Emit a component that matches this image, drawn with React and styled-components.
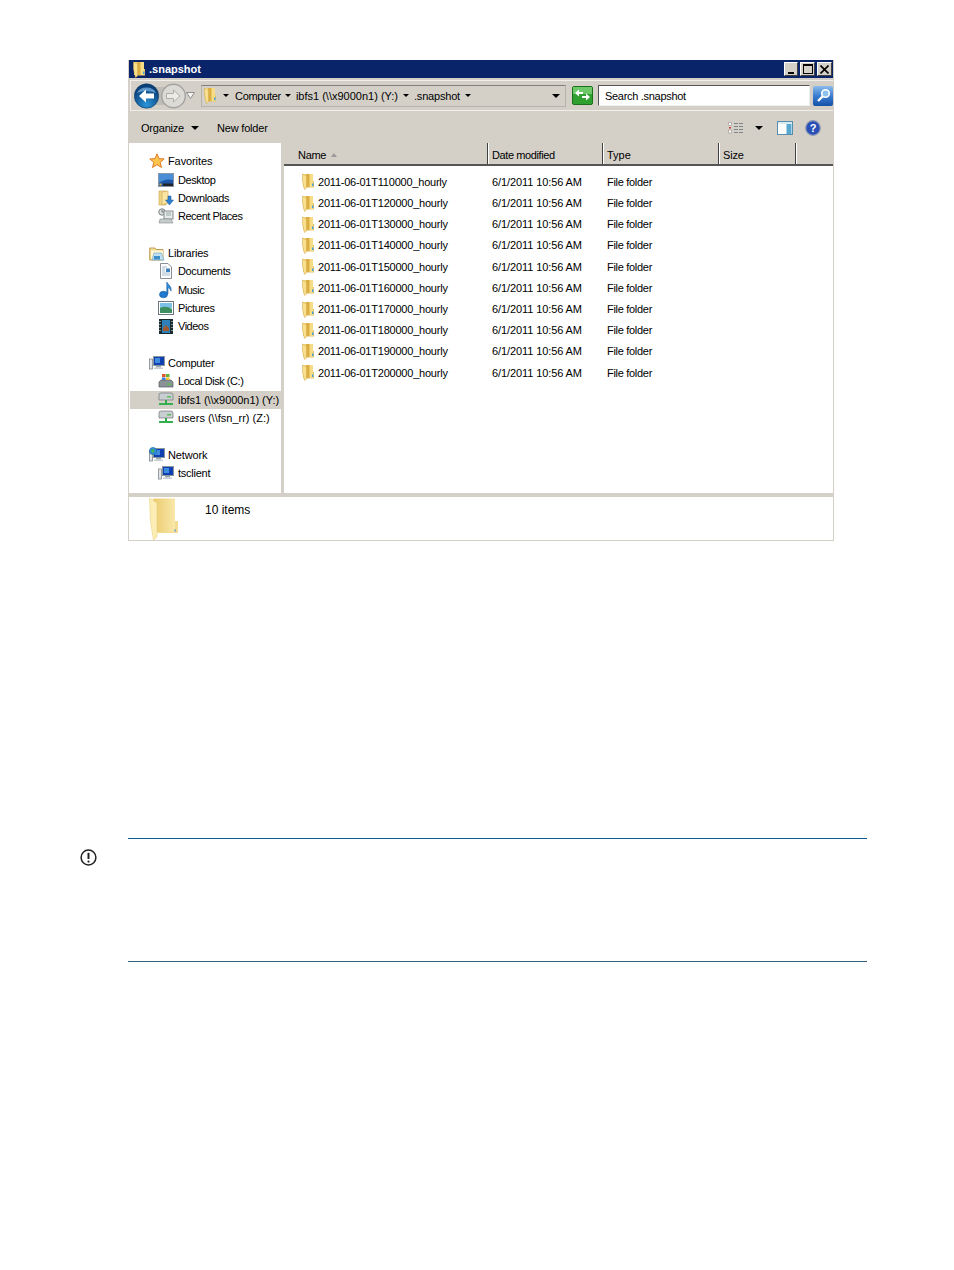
import styled, { createGlobalStyle } from "styled-components";

const GlobalStyle = createGlobalStyle`
  html, body { margin: 0; padding: 0; background: #fff; }
  body { font-family: "Liberation Sans", Arial, sans-serif; font-size: 11px; color: #000; }
`;

const Page = styled.div`
  width: 954px;
  height: 1270px;
  padding-top: 60px;
  box-sizing: border-box;
  overflow: hidden;
`;

const Window = styled.div`
  width: 706px;
  height: 481px;
  margin-left: 128px;
  display: flex;
  flex-direction: column;
  box-sizing: border-box;
  border-left: 1px solid #d4d0c8;
  border-right: 1px solid #d4d0c8;
  border-bottom: 1px solid #d4d0c8;
`;

const TitleBar = styled.div`
  height: 18px;
  background: #0a246a;
  display: flex;
  align-items: center;
  padding: 0 1px 0 3px;
  gap: 3px;
  color: #fff;
  font-weight: bold;
`;

const TitleText = styled.span`
  flex: 1;
`;

const WinButton = styled.div`
  width: ${(p) => p.$w || 15}px;
  height: 14px;
  margin-left: -1px;
  background: #d4d0c8;
  border: 1px solid;
  border-color: #fff #404040 #404040 #fff;
  box-sizing: border-box;
  display: flex;
  align-items: center;
  justify-content: center;
`;

const AddressBand = styled.div`
  height: 35px;
  background: #d4d0c8;
  display: flex;
  align-items: center;
  gap: 6px;
  padding: 0 0 0 4px;
  border: 2px solid #d4d0c8;
  border-left-width: 1px;
  border-right-width: 0;
  box-shadow: inset 1px 1px 0 #f1efea, inset 0 -1px 0 #f1efea;
  box-sizing: border-box;
`;

const NavGroup = styled.div`
  display: flex;
  align-items: center;
  width: 61px;
  flex: none;
`;

const AddressBox = styled.div`
  width: 365px;
  height: 22px;
  box-sizing: border-box;
  border: 1px solid #b8b4ac;
  border-top-color: #808080;
  display: flex;
  align-items: center;
  padding: 0 5px 0 1px;
`;

const Crumb = styled.span`
  margin-left: ${(p) => p.$left || 0}px;
  margin-right: ${(p) => p.$right || 0}px;
  white-space: nowrap;
  letter-spacing: ${(p) => p.$track || 0}px;
  display: flex;
  align-items: center;
`;

const Spacer = styled.div`
  flex: 1;
`;

const SearchBox = styled.div`
  width: 212px;
  height: 21px;
  margin-left: -1px;
  box-sizing: border-box;
  background: #fff;
  border: 1px solid #555;
  border-right-color: #eee;
  border-bottom-color: #eee;
  padding-left: 6px;
  line-height: 20px;
  letter-spacing: -0.3px;
`;

const SearchButton = styled.div`
  width: 20px;
  height: 20px;
  margin-left: -3px;
  border-radius: 2px;
  background: linear-gradient(#8cbcec 0%, #3a7cd0 50%, #1452a8 100%);
  display: flex;
  align-items: center;
  justify-content: center;
`;

const Toolbar = styled.div`
  height: 30px;
  background: #d4d0c8;
  display: flex;
  align-items: center;
  padding-left: 12px;
`;

const ToolLabel = styled.span`
  margin-left: ${(p) => p.$left || 0}px;
  margin-right: ${(p) => p.$right || 0}px;
  letter-spacing: -0.2px;
`;

const ToolIcons = styled.div`
  margin-left: auto;
  display: flex;
  align-items: center;
  padding-right: 12px;
`;

const ToolGap = styled.span`
  width: ${(p) => p.$w}px;
`;

const Main = styled.div`
  flex: 1;
  display: flex;
  min-height: 0;
`;

const Sidebar = styled.div`
  width: 152px;
  border-right: 3px solid #d4d0c8;
  padding-top: 9.2px;
  display: flex;
  flex-direction: column;
  gap: 18.8px;
`;

const NavSection = styled.div`
  display: flex;
  flex-direction: column;
`;

const NavRow = styled.div`
  height: 18.25px;
  display: flex;
  align-items: center;
  gap: ${(p) => (p.$child ? 4 : 3)}px;
  margin-left: 1px;
  padding-left: ${(p) => (p.$child ? 28 : 19)}px;
  background: ${(p) => (p.$selected ? "#d4d0c8" : "transparent")};
  white-space: nowrap;
  letter-spacing: ${(p) => p.$track || 0}px;
`;

const NavIcon = styled.span`
  width: 16px;
  height: 16px;
  display: flex;
  align-items: center;
  justify-content: center;
  flex: none;
`;

const Content = styled.div`
  flex: 1;
  display: flex;
  flex-direction: column;
`;

const Header = styled.div`
  height: 23px;
  display: flex;
  background: #d4d0c8;
  border-bottom: 2px solid #555;
  box-sizing: border-box;
`;

const HeaderCell = styled.div`
  width: ${(p) => p.$w}px;
  box-sizing: border-box;
  padding: 2px 0 0 ${(p) => p.$pad || 3}px;
  border-right: 1px solid #404040;
  box-shadow: 1px 0 0 #fff;
  margin-right: 1px;
  display: flex;
  align-items: center;
  gap: 5px;
  letter-spacing: ${(p) => p.$track || 0}px;
`;

const FileList = styled.div`
  padding-top: 5.3px;
  display: flex;
  flex-direction: column;
`;

const FileRow = styled.div`
  height: 21.2px;
  display: flex;
  align-items: center;
`;

const NameCell = styled.div`
  width: 208px;
  display: flex;
  align-items: center;
  gap: 3px;
  padding-left: 17px;
  box-sizing: border-box;
  letter-spacing: -0.22px;
`;

const DateCell = styled.div`
  width: 115px;
  letter-spacing: -0.1px;
`;

const TypeCell = styled.span`
  letter-spacing: -0.3px;
`;

const DetailsPane = styled.div`
  height: 47px;
  border-top: 4px solid #d4d0c8;
  box-sizing: border-box;
  display: flex;
  padding: 1px 0 0 20px;
  gap: 26px;
`;

const ItemCount = styled.div`
  font-size: 12px;
  padding-top: 5px;
`;

const Note = styled.div`
  margin: 297px 0 0 80px;
  display: flex;
`;

const NoteIcon = styled.div`
  width: 48px;
  padding-top: 11px;
`;

const NoteBody = styled.div`
  width: 739px;
  height: 124px;
  box-sizing: border-box;
  border-top: 1px solid #0a5a96;
  border-bottom: 1px solid #33607f;
`;

const FolderIcon = () => (
  <svg width="14" height="17" viewBox="0 0 14 17">
    <path d="M2 1 H12 V14 H2 Z" fill="#f6dc86" />
    <path d="M5 1 H8.5 V14 H5 Z" fill="#dcae42" />
    <path d="M1.5 1 L5.5 3 V15 L3.5 16.5 L1.5 8 Z" fill="#f9e08e" stroke="#cfa545" strokeWidth=".5" />
    <path d="M12 8 H13 V14.5 H5.5 V14 H12 Z" fill="#e6c268" />
    <rect x="11" y="10.5" width="1.4" height="2.5" fill="#3f9fe0" />
  </svg>
);

const LargeFolder = () => (
  <svg width="30" height="42" viewBox="0 0 30 42">
    <defs>
      <linearGradient id="largeBack" x1="0" x2="1" y1="0" y2="0">
        <stop offset="0" stopColor="#ecca6c" />
        <stop offset="1" stopColor="#f8e8aa" />
      </linearGradient>
    </defs>
    <path d="M4 0.5 H26 V34 H8 Z" fill="url(#largeBack)" />
    <path d="M0.5 0 L8 5 V39 L4.5 42 L1.5 24 Z" fill="#fbeeb4" stroke="#e6cb78" strokeWidth=".5" />
    <path d="M26 23 H29 V35 H8 V34 H26 Z" fill="#f4dc92" />
    <rect x="25.5" y="31.5" width="1.2" height="2" fill="#3f8fe0" />
  </svg>
);

const StarIcon = () => (
  <svg width="16" height="16" viewBox="0 0 16 16">
    <path d="M8 .8 L10 5.6 L15.2 6 L11.2 9.3 L12.5 14.5 L8 11.7 L3.5 14.5 L4.8 9.3 L.8 6 L6 5.6 Z" fill="#fbc54e" stroke="#e07a28" strokeWidth="1" />
  </svg>
);

const MonitorIcon = ({ globe }) => (
  <svg width="16" height="16" viewBox="0 0 16 16">
    <rect x="0.5" y="4" width="3" height="10" fill="#dfe3e6" stroke="#6f7a80" strokeWidth=".7" />
    <rect x="4.5" y="1.5" width="11" height="9" fill="#0f3fb0" stroke="#8a979f" />
    <rect x="6" y="3" width="5" height="5" fill="#3f8be0" />
    <rect x="7" y="11" width="5" height="1.5" fill="#9aa5ab" />
    <rect x="5" y="12.5" width="9" height="1.5" fill="#c8cfd3" />
    {globe && <circle cx="4" cy="4" r="3.6" fill="#2f8fd8" stroke="#1b6a9e" strokeWidth=".6" />}
    {globe && <path d="M2 3 L5 2 L5.5 4.5 L3 6 Z" fill="#4cb050" />}
  </svg>
);

const DesktopIcon = () => (
  <svg width="16" height="14" viewBox="0 0 16 14">
    <rect x=".5" y=".5" width="15" height="13" fill="#1e56a8" stroke="#8896a8" />
    <path d="M1 1 H15 V7 Q7 5 1 10 Z" fill="#4a8ed8" />
    <rect x="5" y="10.5" width="10" height="2.5" fill="#20242a" />
    <rect x="1.5" y="10.5" width="2" height="2" fill="#e8b030" />
  </svg>
);

const DownloadsIcon = () => (
  <svg width="16" height="16" viewBox="0 0 16 16">
    <path d="M1 1 H8 V15 H1 Z" fill="#f0d486" stroke="#c9a44e" strokeWidth=".6" />
    <path d="M4 2 L10 1 V13 L4 15 Z" fill="#fae5a2" stroke="#c9a44e" strokeWidth=".6" />
    <path d="M10 6 H13 V10 H15.5 L11.5 15 L7.5 10 H10 Z" fill="#2f7fd0" stroke="#1c5a9e" strokeWidth=".5" />
  </svg>
);

const RecentIcon = () => (
  <svg width="16" height="16" viewBox="0 0 16 16">
    <circle cx="4" cy="4" r="3.2" fill="#d8dcdc" stroke="#7d8484" />
    <path d="M4 2 V4 H6" stroke="#555" strokeWidth=".7" fill="none" />
    <rect x="6" y="3" width="9" height="8" fill="#e6eaea" stroke="#858c8c" />
    <path d="M8 5 H13 M8 7 H13" stroke="#9aa" />
    <path d="M2 11 H13 L15 15 H1 Z" fill="#c6cbcb" stroke="#858c8c" strokeWidth=".6" />
  </svg>
);

const LibraryIcon = () => (
  <svg width="16" height="15" viewBox="0 0 16 15">
    <path d="M.7 2 H6 L7 3.5 H14 V14 H.7 Z" fill="#f3dc98" stroke="#bd9f52" />
    <path d="M2 4.5 H14 V13 H2 Z" fill="#fff6d8" />
    <path d="M3 14 L5 7 H12.5 L15 14 Z" fill="#bfe0f0" stroke="#6a9fc0" strokeWidth=".6" />
    <path d="M5 13.5 V10 H11 V13.5 Z" fill="#3d8ec8" />
  </svg>
);

const DocumentIcon = () => (
  <svg width="14" height="16" viewBox="0 0 14 16">
    <path d="M1.5 .5 H9 L12.5 4 V15.5 H1.5 Z" fill="#fdfdfd" stroke="#8a8f96" />
    <path d="M3 4 H8 M3 6 H6 M3 8 H6 M3 10 H11 M3 12 H11" stroke="#8ea8c0" strokeWidth=".8" />
    <rect x="7" y="5.5" width="4" height="3.5" fill="#3f7fc0" />
  </svg>
);

const MusicIcon = () => (
  <svg width="14" height="18" viewBox="0 0 14 18">
    <ellipse cx="4.5" cy="13.5" rx="4" ry="3.3" fill="#1f79d0" stroke="#145a9e" strokeWidth=".6" />
    <path d="M7.8 13 V1 C9 4 13 5 12 10 C11 7 9.5 7 9 6.5 V13 Z" fill="#2f8fe0" stroke="#145a9e" strokeWidth=".6" />
  </svg>
);

const PicturesIcon = () => (
  <svg width="16" height="14" viewBox="0 0 16 14">
    <rect x=".5" y=".5" width="15" height="13" fill="#fff" stroke="#6d7680" />
    <rect x="2" y="2" width="12" height="5" fill="#7ec0e8" />
    <path d="M2 7 Q8 4 14 8 V12 H2 Z" fill="#3e8f60" />
  </svg>
);

const VideosIcon = () => (
  <svg width="14" height="15" viewBox="0 0 14 15">
    <rect x="0" y="0" width="14" height="15" fill="#1c2a30" />
    <rect x="3" y="1" width="8" height="13" fill="#2d80b8" />
    <path d="M4 9 L7 6 L10 9 V12 H4 Z" fill="#a05a30" />
    <path d="M1 2 V3 M1 5 V6 M1 8 V9 M1 11 V12 M13 2 V3 M13 5 V6 M13 8 V9 M13 11 V12" stroke="#cfe" strokeWidth="1" />
  </svg>
);

const LocalDiskIcon = () => (
  <svg width="16" height="16" viewBox="0 0 16 16">
    <path d="M1 9 L3 7 H13 L15 9 V14 H1 Z" fill="#8a9298" stroke="#555c62" strokeWidth=".7" />
    <rect x="9" y="10.5" width="4" height="1.5" fill="#5fc04f" />
    <rect x="4" y="1" width="3.5" height="3" fill="#e0552c" />
    <rect x="8" y="1" width="3.5" height="3" fill="#68b038" />
    <rect x="4" y="4.5" width="3.5" height="2.5" fill="#3a7fd0" />
    <rect x="8" y="4.5" width="3.5" height="2.5" fill="#f0c030" />
  </svg>
);

const NetDriveIcon = () => (
  <svg width="16" height="15" viewBox="0 0 16 15">
    <path d="M1 3 Q1 1 3 1 H13 Q15 1 15 3 V8 H1 Z" fill="#c9ced2" stroke="#6d7478" strokeWidth=".7" />
    <rect x="9" y="4" width="4" height="1.5" fill="#57c050" />
    <rect x="7" y="8" width="2" height="3" fill="#2fa84a" />
    <rect x="1" y="11" width="14" height="2" fill="#34b050" />
  </svg>
);

const Caret = ({ size = 4 }) => (
  <svg width={size * 2} height={size} viewBox="0 0 8 4">
    <path d="M0 0 H8 L4 4 Z" fill="#000" />
  </svg>
);

const NavButtons = () => (
  <svg width="52" height="26" viewBox="0 0 52 26">
    <defs>
      <radialGradient id="backFill" cx="50%" cy="85%" r="70%">
        <stop offset="0" stopColor="#2a94d8" />
        <stop offset="1" stopColor="#0a3f78" />
      </radialGradient>
    </defs>
    <rect x="20" y="4" width="12" height="18" fill="#c0bdb6" />
    <circle cx="39.5" cy="13" r="11.8" fill="#dcdad5" stroke="#a3a3a3" strokeWidth="1.4" />
    <path d="M46 13 L39.5 7 V10.5 H32.5 V15.5 H39.5 V19 Z" fill="#ebeae6" stroke="#a8a8a8" strokeWidth=".9" />
    <circle cx="12.5" cy="13" r="12.2" fill="url(#backFill)" stroke="#0f3c66" strokeWidth=".6" />
    <path d="M3 10 A10 8 0 0 1 22 10 Q12 6 3 10 Z" fill="#7cb8e8" opacity=".7" />
    <path d="M5 13 L12 6.5 V10.5 H20 V15.5 H12 V19.5 Z" fill="#fff" />
  </svg>
);

const HollowCaret = () => (
  <svg width="9" height="7" viewBox="0 0 9 7">
    <path d="M.5 .5 H8.5 L4.5 6.5 Z" fill="#f4f4f2" stroke="#8f8f8f" />
  </svg>
);

const RefreshButton = () => (
  <svg width="21" height="19" viewBox="0 0 21 19">
    <rect x=".5" y=".5" width="20" height="18" rx="1.5" fill="#30a030" stroke="#1c701c" />
    <rect x="1" y="1" width="19" height="7" fill="#6cc868" />
    <path d="M3 7 L7 3.5 V6 H11 V8 H7 V10.5 Z M18 11 L14 14.5 V12 H10 V10 H14 V7.5 Z" fill="#fff" />
  </svg>
);

const SearchGlass = () => (
  <svg width="15" height="15" viewBox="0 0 15 15">
    <circle cx="9.5" cy="5.5" r="3.8" fill="#8cc0ee" stroke="#fff" strokeWidth="1.6" />
    <path d="M6.5 8.5 L2 13" stroke="#fff" strokeWidth="2.4" />
  </svg>
);

const ViewsIcon = () => (
  <svg width="15" height="12" viewBox="0 0 15 12">
    <path d="M6 1.5 H15 M6 4.5 H15 M6 7.5 H15 M6 10.5 H15" stroke="#7c858c" strokeDasharray="4 1" />
    <path d="M.5 .5 H3.5 V3.5 H.5 Z M.5 8 H3.5 V11 H.5 Z" fill="#fff" stroke="#a9a39a" strokeWidth=".8" />
    <rect x="1" y="5" width="2" height="1.5" fill="#d04040" />
  </svg>
);

const PreviewIcon = () => (
  <svg width="16" height="14" viewBox="0 0 16 14">
    <rect x=".5" y=".5" width="15" height="13" fill="#fff" stroke="#5a8cab" />
    <rect x="9.5" y="3" width="5" height="10" fill="#58a8d0" />
    <rect x="1" y="1" width="14" height="2" fill="#d8ebf4" />
  </svg>
);

const HelpIcon = () => (
  <svg width="16" height="16" viewBox="0 0 16 16">
    <circle cx="8" cy="8" r="7.3" fill="#2a50b8" stroke="#8c98b4" strokeWidth="1.2" />
    <text x="8" y="12" fontSize="11" fontWeight="bold" textAnchor="middle" fill="#fff" fontFamily="Liberation Sans">?</text>
  </svg>
);

const ImportantIcon = () => (
  <svg width="18" height="18" viewBox="0 0 18 18">
    <circle cx="8.5" cy="8.5" r="7.4" fill="none" stroke="#222" strokeWidth="1.5" />
    <path d="M8.5 3.8 V10" stroke="#222" strokeWidth="2" />
    <circle cx="8.5" cy="12.6" r="1.1" fill="#222" />
  </svg>
);

const sections = [
  [
    { label: "Favorites", icon: <StarIcon />, track: -0.1 },
    { label: "Desktop", icon: <DesktopIcon />, child: true, track: -0.4 },
    { label: "Downloads", icon: <DownloadsIcon />, child: true, track: -0.35 },
    { label: "Recent Places", icon: <RecentIcon />, child: true, track: -0.5 },
  ],
  [
    { label: "Libraries", icon: <LibraryIcon />, track: -0.2 },
    { label: "Documents", icon: <DocumentIcon />, child: true, track: -0.35 },
    { label: "Music", icon: <MusicIcon />, child: true, track: -0.5 },
    { label: "Pictures", icon: <PicturesIcon />, child: true, track: -0.4 },
    { label: "Videos", icon: <VideosIcon />, child: true, track: -0.5 },
  ],
  [
    { label: "Computer", icon: <MonitorIcon />, track: -0.25 },
    { label: "Local Disk (C:)", icon: <LocalDiskIcon />, child: true, track: -0.45 },
    { label: "ibfs1 (\\\\x9000n1) (Y:)", icon: <NetDriveIcon />, child: true, selected: true, track: -0.05 },
    { label: "users (\\\\fsn_rr) (Z:)", icon: <NetDriveIcon />, child: true, track: 0 },
  ],
  [
    { label: "Network", icon: <MonitorIcon globe />, track: -0.15 },
    { label: "tsclient", icon: <MonitorIcon />, child: true, track: -0.25 },
  ],
];

const hours = ["11", "12", "13", "14", "15", "16", "17", "18", "19", "20"];

const App = () => (
  <Page>
    <GlobalStyle />
    <Window>
      <TitleBar>
        <FolderIcon />
        <TitleText>.snapshot</TitleText>
        <WinButton $w={14}>
          <svg width="9" height="9" viewBox="0 0 9 9"><rect x="1" y="7" width="6" height="2" fill="#000" /></svg>
        </WinButton>
        <WinButton>
          <svg width="10" height="10" viewBox="0 0 10 10"><rect x=".5" y="1" width="9" height="8.5" fill="none" stroke="#000" /><rect x="0" y="0" width="10" height="2" fill="#000" /></svg>
        </WinButton>
        <WinButton>
          <svg width="9" height="9" viewBox="0 0 9 9"><path d="M.5 .5 L8.5 8.5 M8.5 .5 L.5 8.5" stroke="#000" strokeWidth="1.6" /></svg>
        </WinButton>
      </TitleBar>
      <AddressBand>
        <NavGroup>
          <NavButtons />
          <HollowCaret />
        </NavGroup>
        <AddressBox>
          <FolderIcon />
          <Crumb $left={6} $right={6}><Caret size={3} /></Crumb>
          <Crumb $right={4} $track={-0.3}>Computer</Crumb>
          <Crumb $right={5}><Caret size={3} /></Crumb>
          <Crumb $right={5}>ibfs1 (\\x9000n1) (Y:)</Crumb>
          <Crumb $right={5}><Caret size={3} /></Crumb>
          <Crumb $right={5} $track={-0.2}>.snapshot</Crumb>
          <Crumb><Caret size={3} /></Crumb>
          <Spacer />
          <Caret />
        </AddressBox>
        <RefreshButton />
        <SearchBox>Search .snapshot</SearchBox>
        <SearchButton><SearchGlass /></SearchButton>
      </AddressBand>
      <Toolbar>
        <ToolLabel $right={7}>Organize</ToolLabel>
        <Caret />
        <ToolLabel $left={18}>New folder</ToolLabel>
        <ToolIcons>
          <ViewsIcon />
          <ToolGap $w={12} />
          <Caret />
          <ToolGap $w={14} />
          <PreviewIcon />
          <ToolGap $w={12} />
          <HelpIcon />
        </ToolIcons>
      </Toolbar>
      <Main>
        <Sidebar>
          {sections.map((items) => (
            <NavSection key={items[0].label}>
              {items.map((item) => (
                <NavRow key={item.label} $child={item.child} $selected={item.selected} $track={item.track}>
                  <NavIcon>{item.icon}</NavIcon>
                  {item.label}
                </NavRow>
              ))}
            </NavSection>
          ))}
        </Sidebar>
        <Content>
          <Header>
            <HeaderCell $w={204} $pad={14} $track={-0.3}>
              Name
              <svg width="6" height="4" viewBox="0 0 6 4"><path d="M0 4 L3 0 L6 4 Z" fill="#9a9a9a" /></svg>
            </HeaderCell>
            <HeaderCell $w={114} $track={-0.4}>Date modified</HeaderCell>
            <HeaderCell $w={115}>Type</HeaderCell>
            <HeaderCell $w={76} $track={-0.2}>Size</HeaderCell>
          </Header>
          <FileList>
            {hours.map((hour) => (
              <FileRow key={hour}>
                <NameCell>
                  <FolderIcon />
                  2011-06-01T{hour}0000_hourly
                </NameCell>
                <DateCell>6/1/2011 10:56 AM</DateCell>
                <TypeCell>File folder</TypeCell>
              </FileRow>
            ))}
          </FileList>
        </Content>
      </Main>
      <DetailsPane>
        <LargeFolder />
        <ItemCount>10 items</ItemCount>
      </DetailsPane>
    </Window>
    <Note>
      <NoteIcon><ImportantIcon /></NoteIcon>
      <NoteBody />
    </Note>
  </Page>
);

export default App;
